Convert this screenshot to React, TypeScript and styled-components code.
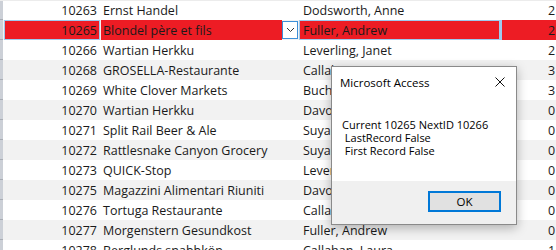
import React from "react";
import styled, { createGlobalStyle } from "styled-components";

type OrderRow = {
  id: number;
  customer: string;
  employee: string;
  date: string;
};

const rows: Array<OrderRow> = [
  { id: 10263, customer: "Ernst Handel", employee: "Dodsworth, Anne", date: "2 " },
  { id: 10265, customer: "Blondel père et fils", employee: "Fuller, Andrew", date: "2 " },
  { id: 10266, customer: "Wartian Herkku", employee: "Leverling, Janet", date: "2 " },
  { id: 10268, customer: "GROSELLA-Restaurante", employee: "Callahan, Laura", date: "3 " },
  { id: 10269, customer: "White Clover Markets", employee: "Buchanan, Steven", date: "3 " },
  { id: 10270, customer: "Wartian Herkku", employee: "Davolio, Nancy", date: "0 " },
  { id: 10271, customer: "Split Rail Beer & Ale", employee: "Suyama, Michael", date: "0 " },
  { id: 10272, customer: "Rattlesnake Canyon Grocery", employee: "Suyama, Michael", date: "0 " },
  { id: 10273, customer: "QUICK-Stop", employee: "Leverling, Janet", date: "0 " },
  { id: 10275, customer: "Magazzini Alimentari Riuniti", employee: "Davolio, Nancy", date: "0 " },
  { id: 10276, customer: "Tortuga Restaurante", employee: "Callahan, Laura", date: "0 " },
  { id: 10277, customer: "Morgenstern Gesundkost", employee: "Fuller, Andrew", date: "0 " },
  { id: 10278, customer: "Berglunds snabbköp", employee: "Callahan, Laura", date: "1 " },
];

const SELECTED_ID = 10265;

const GlobalStyle = createGlobalStyle`
  html, body {
    margin: 0;
    padding: 0;
    background: #ffffff;
    overflow: hidden;
  }
  body {
    font-family: "Open Sans", "Liberation Sans", sans-serif;
  }
`;

const App = () => {
  return (
    <>
      <GlobalStyle />
      <Screen>
        <Sheet>
          {rows.map((r, i) => {
            const selected = r.id === SELECTED_ID;
            return (
              <Row key={r.id} $alt={i % 2 === 1} $first={i === 0}>
                <Selector />
                <IdCell $selected={selected}>{r.id}</IdCell>
                <CustomerCell>
                  <CustomerText $selected={selected}>{r.customer}</CustomerText>
                  {selected && (
                    <ComboButton>
                      <svg width="9" height="6" viewBox="0 0 9 6">
                        <path d="M1 1 L4.5 4.5 L8 1" fill="none" stroke="#333" strokeWidth="1" />
                      </svg>
                    </ComboButton>
                  )}
                </CustomerCell>
                <EmployeeCell $selected={selected}>{r.employee}</EmployeeCell>
                <DateCell $selected={selected}>{r.date}</DateCell>
              </Row>
            );
          })}
        </Sheet>

        <Dialog>
          <TitleBar>
            <Title>Microsoft Access</Title>
            <CloseIcon width="10" height="10" viewBox="0 0 10 10">
              <path d="M0.5 0.5 L9.5 9.5 M9.5 0.5 L0.5 9.5" stroke="#111" strokeWidth="1" />
            </CloseIcon>
          </TitleBar>
          <Message>
            <div>Current 10265 NextID 10266</div>
            <div>&nbsp;LastRecord False</div>
            <div>&nbsp;First Record False</div>
          </Message>
          <Footer>
            <OkButton>OK</OkButton>
          </Footer>
        </Dialog>
      </Screen>
    </>
  );
};

const Screen = styled.div`
  position: relative;
  width: 556px;
  height: 250px;
  overflow: hidden;
`;

const Sheet = styled.div`
  display: flex;
  flex-direction: column;
  font-family: "Open Sans", "Liberation Sans", sans-serif;
  font-size: 12.5px;
  color: #1a1a1a;
`;

const Row = styled.div<{ $alt: boolean; $first: boolean }>`
  display: flex;
  height: 20px;
  align-items: stretch;
  background: ${(p) => (p.$alt ? "#f2f2f2" : "#ffffff")};
  border-top: ${(p) => (p.$first ? "1px solid #ececec" : "none")};
  box-sizing: border-box;
  white-space: nowrap;
`;

const Selector = styled.div`
  flex: 0 0 3px;
  background: #ccd0d7;
  border-bottom: 1px solid #a9adb5;
  box-sizing: border-box;
`;

const IdCell = styled.div<{ $selected: boolean }>`
  flex: 0 0 96px;
  display: flex;
  align-items: center;
  justify-content: flex-end;
  box-sizing: border-box;
  padding-right: 2px;
  margin-left: ${(p) => (p.$selected ? "1px" : "0")};
  margin-right: ${(p) => (p.$selected ? "-1px" : "0")};
  background: ${(p) => (p.$selected ? "#ed1c24" : "transparent")};
  border: ${(p) => (p.$selected ? "1px solid #9ecaee" : "none")};
`;

const CustomerCell = styled.div`
  flex: 0 0 200px;
  display: flex;
  align-items: stretch;
  box-sizing: border-box;
  padding-left: 2px;
`;

const CustomerText = styled.div<{ $selected: boolean }>`
  flex: 1;
  display: flex;
  align-items: center;
  padding-left: 2px;
  overflow: hidden;
  background: ${(p) => (p.$selected ? "#ed1c24" : "transparent")};
`;

const ComboButton = styled.div`
  flex: 0 0 16px;
  display: flex;
  align-items: center;
  justify-content: center;
  box-sizing: border-box;
  background: #ffffff;
  border: 1px solid #3d8fd8;
  margin: 1px 1px 1px 0;
`;

const EmployeeCell = styled.div<{ $selected: boolean }>`
  flex: 0 0 201px;
  display: flex;
  align-items: center;
  box-sizing: border-box;
  padding-left: ${(p) => (p.$selected ? "3px" : "4px")};
  background: ${(p) => (p.$selected ? "#ed1c24" : "transparent")};
  border: ${(p) => (p.$selected ? "1px solid #9ecaee" : "none")};
  overflow: hidden;
`;

const DateCell = styled.div<{ $selected: boolean }>`
  flex: 1 0 auto;
  display: flex;
  align-items: center;
  box-sizing: border-box;
  padding-left: ${(p) => (p.$selected ? "46px" : "48px")};
  background: ${(p) => (p.$selected ? "#ed1c24" : "transparent")};
  border-left: ${(p) => (p.$selected ? "2px solid #9ecaee" : "none")};
`;

const Dialog = styled.div`
  position: absolute;
  left: 331px;
  top: 66px;
  width: 186px;
  height: 159px;
  box-sizing: border-box;
  display: flex;
  flex-direction: column;
  background: #ffffff;
  border: 1px solid #8a8a8a;
  box-shadow: 0 3px 10px rgba(0, 0, 0, 0.28);
  font-family: "Open Sans", "Liberation Sans", sans-serif;
  color: #000000;
`;

const TitleBar = styled.div`
  display: flex;
  align-items: center;
  justify-content: space-between;
  height: 30px;
  padding: 0 11px 0 8px;
`;

const Title = styled.div`
  font-size: 11.5px;
`;

const CloseIcon = styled.svg`
  display: block;
`;

const Message = styled.div`
  flex: 1;
  padding: 21px 0 0 10px;
  font-size: 11px;
  line-height: 13px;
  white-space: pre;
`;

const Footer = styled.div`
  flex: 0 0 43px;
  display: flex;
  align-items: center;
  justify-content: flex-end;
  padding-right: 15px;
  background: #f0f0f0;
`;

const OkButton = styled.div`
  width: 73px;
  height: 21px;
  box-sizing: border-box;
  display: flex;
  align-items: center;
  justify-content: center;
  background: #e1e1e1;
  border: 2px solid #0078d7;
  font-size: 11.5px;
  margin-top: -2px;
`;

App.displayName = "App";
export default App;
